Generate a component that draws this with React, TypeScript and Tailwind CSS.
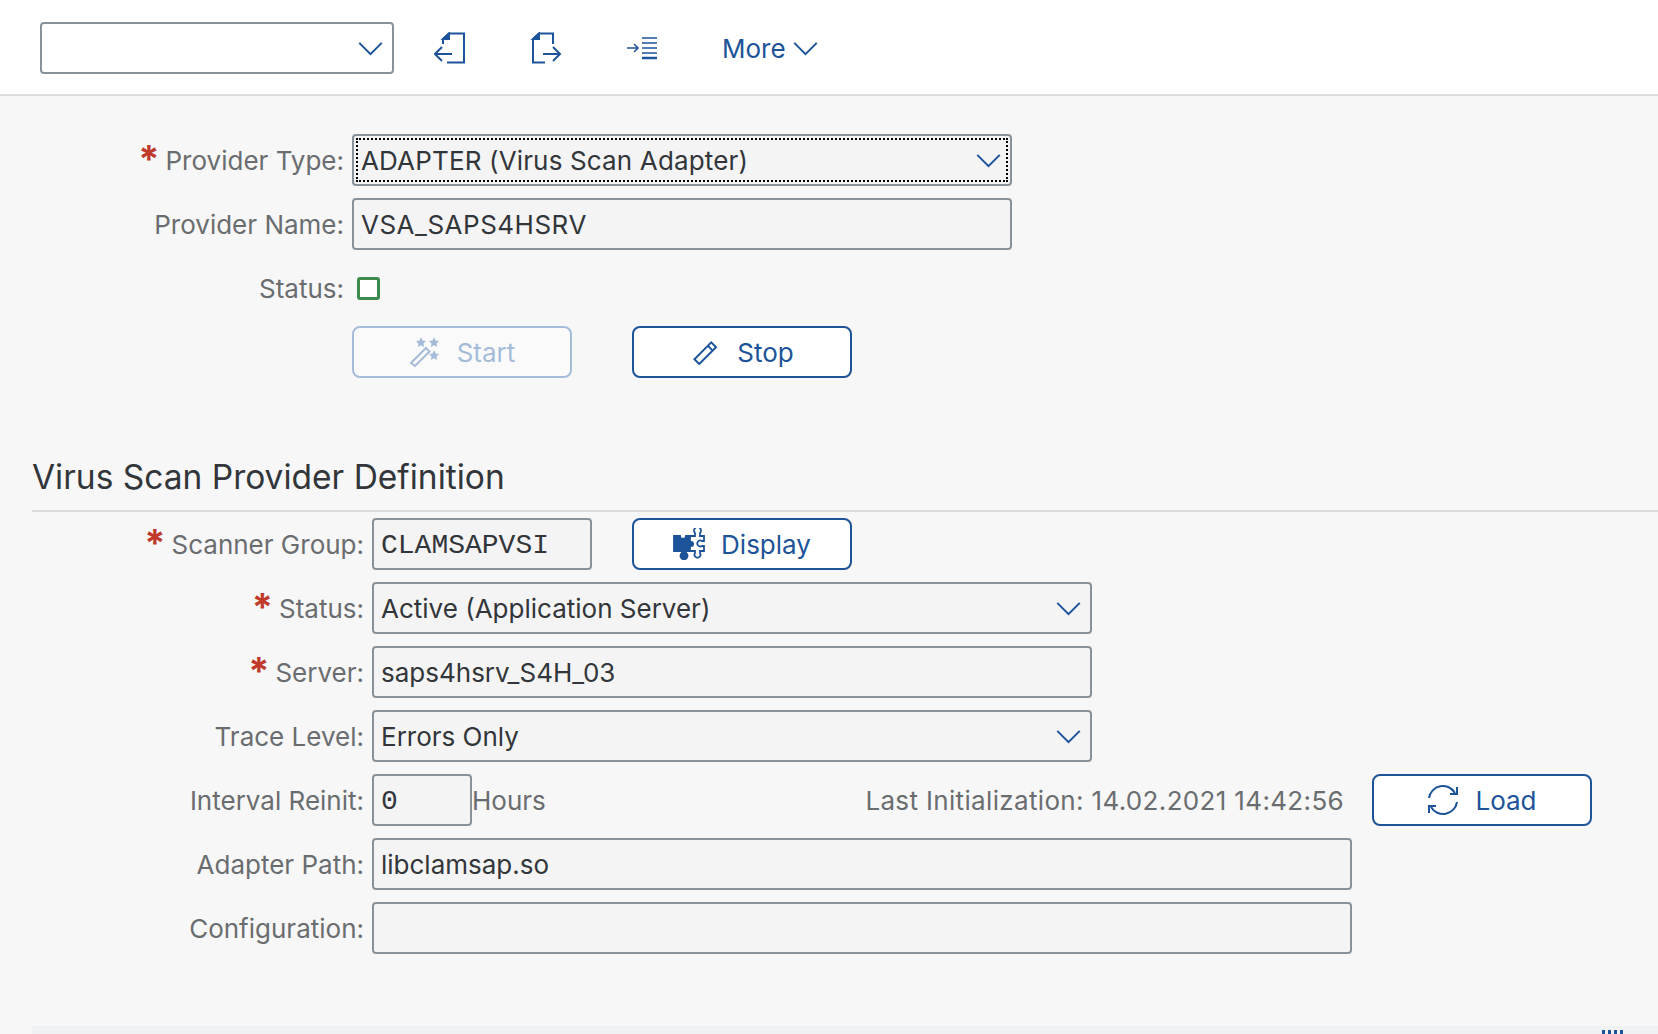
import type { ReactNode } from "react";

const SANS = "font-['Inter','Noto_Sans',sans-serif]";

function Chevron({ className }: { className: string }) {
  return (
    <svg viewBox="0 0 26 16" className={className} fill="none" stroke="#1d5499" strokeWidth="2.2">
      <path d="M1 2 13 14 25 2" />
    </svg>
  );
}

function ImportDoc() {
  return (
    <svg viewBox="0 0 32 32" className="size-8" fill="none" stroke="#1d5499" strokeWidth="2">
      <path d="M9 12V7l6-5.500h15V30.500H13" />
      <path d="M9 7h6V1.500z" fill="#1d5499" />
      <path d="M1 22h17M8 15l-7 7 7 7" />
    </svg>
  );
}

function ExportDoc() {
  return (
    <svg viewBox="0 0 32 32" className="size-8" fill="none" stroke="#1d5499" strokeWidth="2">
      <path d="M3 7l6-5.500h14V12M3 7v23.500h12" />
      <path d="M3 7h6V1.500z" fill="#1d5499" />
      <path d="M13 22h17M23 15l7 7-7 7" />
    </svg>
  );
}

function IndentList() {
  return (
    <svg viewBox="0 0 32 24" className="h-6 w-8" fill="none" stroke="#1d5499" strokeWidth="1.500">
      <path d="M1 12h11M8 8l4 4-4 4" />
      <path d="M16 2h15M16 7h15M16 12h15M16 17h15" strokeWidth="1.500" />
      <path d="M16 22h15" strokeWidth="2.500" />
    </svg>
  );
}

function Wand() {
  return (
    <svg viewBox="0 0 32 32" className="size-8" fill="#a5bcd9" stroke="none">
      <path d="M2 27 17 12l3.500 3.500L6 30z" fill="none" stroke="#a5bcd9" strokeWidth="2" />
      <path d="M12 1l1.500 3.500 3.500.500-2.500 2.500.600 3.500-3.100-1.800-3.100 1.800.600-3.500L7 5l3.500-.500z" />
      <path d="M25 1l1.500 3.500 3.500.500-2.500 2.500.600 3.500-3.100-1.800-3.100 1.800.600-3.500L20 5l3.500-.500z" />
      <path d="M25 14l1.500 3.500 3.500.500-2.500 2.500.600 3.500-3.100-1.800-3.100 1.800.600-3.500L20 18l3.500-.500z" />
    </svg>
  );
}

function Pencil() {
  return (
    <svg viewBox="0 0 26 26" className="mx-[3px] size-[25px]" fill="none" stroke="#1d5499" strokeWidth="2">
      <path d="M1.500 20 19 2.500l5 5L6.500 25z" />
      <path d="M15.500 6l5 5" />
    </svg>
  );
}

function Puzzle() {
  return (
    <svg viewBox="0 0 32 32" className="size-8" fill="none" stroke="#1d5499" strokeWidth="1.800">
      <path d="M1 8h6a3 3 0 1 0 6 0h4v15h-4v2a3.500 3.500 0 1 1-4 0v-2H1z" fill="#1d5499" />
      <path d="M17 8h5V5a3.500 3.500 0 1 1 5 0v3h4v5h-2a3 3 0 1 0 0 5h2v5h-4v2a3 3 0 1 1-5 0v-2h-5" />
      <circle cx="18" cy="16" r="3" fill="#1d5499" stroke="none" />
    </svg>
  );
}

function Refresh() {
  return (
    <svg viewBox="0 0 32 32" className="size-8" fill="none" stroke="#1d5499" strokeWidth="2">
      <path d="M2 14A14 14 0 0 1 28 9" />
      <path d="M30 3v7h-7" />
      <path d="M30 18A14 14 0 0 1 4 23" />
      <path d="M2 29v-7h7" />
    </svg>
  );
}

function Field({ children, mono, className, select, focus }: {
  children?: ReactNode;
  mono?: boolean;
  className: string;
  select?: boolean;
  focus?: boolean;
}) {
  return (
    <div className={`relative flex h-[52px] flex-none items-center rounded-[4px] border-2 border-[#89919a] bg-[#f4f4f4] pl-[7px] text-[#32363a] ${mono ? "pt-[3px] font-['Liberation_Mono',monospace] text-[28px]" : ""} ${className}`}>
      <span className="flex-1 whitespace-nowrap">{children}</span>
      {select && <Chevron className="mr-[8px] h-[15px] w-[27px]" />}
      {focus && <span className="absolute inset-[2px] border-2 border-dotted border-black" />}
    </div>
  );
}

function Label({ children, required, width }: { children: string; required?: boolean; width: string }) {
  return (
    <div className={`flex flex-none items-center justify-end pr-[8px] whitespace-nowrap text-[#6a6d70] ${width}`}>
      {required && <span className="mr-[6px] -mt-[2px] text-[38px] leading-none font-bold text-[#c0392b]">*</span>}
      {children}
    </div>
  );
}

function Action({ icon, text, muted }: { icon: ReactNode; text: string; muted?: boolean }) {
  return (
    <button
      type="button"
      className={`flex h-[52px] w-[220px] flex-none items-center justify-center gap-[16px] rounded-[8px] border-2 ${
        muted ? "border-[#a5bcd9] bg-[#fafafa] text-[#a5bcd9]" : "border-[#1d5499] bg-white text-[#1d5499]"
      }`}
    >
      {icon}
      {text}
    </button>
  );
}

export default function App() {
  const top = "w-[352px]";
  const low = "w-[372px]";

  return (
    <div className={`flex h-[1034px] flex-col bg-[#f7f7f7] text-[26px] ${SANS}`}>
      <div className="flex h-[96px] flex-none items-center border-b-2 border-[#dcdcdc] bg-white pt-[2px] pl-[40px]">
        <div className="flex h-[52px] w-[354px] items-center justify-end rounded-[4px] border-2 border-[#89919a] bg-white pr-[8px]">
          <Chevron className="h-[15px] w-[27px]" />
        </div>
        <div className="ml-[40px] flex items-center gap-[64px]">
          <ImportDoc />
          <ExportDoc />
          <IndentList />
        </div>
        <div className="ml-[64px] flex items-center gap-[6px] text-[#1d5499]">
          More
          <Chevron className="h-[15px] w-[27px]" />
        </div>
      </div>

      <div className="flex flex-col gap-[12px] pt-[38px]">
        <div className="flex">
          <Label required width={top}>Provider Type:</Label>
          <Field select focus className="w-[660px] tracking-[0.15px]">ADAPTER (Virus Scan Adapter)</Field>
        </div>
        <div className="flex">
          <Label width={top}>Provider Name:</Label>
          <Field className="w-[660px] tracking-[0.5px]">VSA_SAPS4HSRV</Field>
        </div>
        <div className="flex h-[52px] items-center">
          <Label width={top}>Status:</Label>
          <span className="ml-[5px] size-[23px] rounded-[3px] border-[3px] border-[#3c8a4c] bg-white" />
        </div>
        <div className="flex">
          <div className={top} />
          <Action muted icon={<Wand />} text="Start" />
          <div className="ml-[60px]">
            <Action icon={<Pencil />} text="Stop" />
          </div>
        </div>
      </div>

      <div className="mt-[71px] ml-[32px] border-b-2 border-[#dcdcdc] pb-[5px] text-[33.5px] leading-[56px] text-[#32363a]">
        Virus Scan Provider Definition
      </div>

      <div className="flex flex-col gap-[12px] pt-[6px]">
        <div className="flex">
          <Label required width={low}>Scanner Group:</Label>
          <Field mono className="w-[220px]">CLAMSAPVSI</Field>
          <div className="ml-[40px]">
            <Action icon={<Puzzle />} text="Display" />
          </div>
        </div>
        <div className="flex">
          <Label required width={low}>Status:</Label>
          <Field select className="w-[720px]">Active (Application Server)</Field>
        </div>
        <div className="flex">
          <Label required width={low}>Server:</Label>
          <Field className="w-[720px]">saps4hsrv_S4H_03</Field>
        </div>
        <div className="flex">
          <Label width={low}>Trace Level:</Label>
          <Field select className="w-[720px]">Errors Only</Field>
        </div>
        <div className="flex items-center">
          <Label width={low}>Interval Reinit:</Label>
          <Field mono className="w-[100px]">0</Field>
          <div className="flex w-[880px] flex-none items-center justify-between pr-[8px] text-[#6a6d70]">
            <span>Hours</span>
            <span className="tracking-[0.34px]">Last Initialization: 14.02.2021 14:42:56</span>
          </div>
          <div className="ml-[20px]">
            <Action icon={<Refresh />} text="Load" />
          </div>
        </div>
        <div className="flex">
          <Label width={low}>Adapter Path:</Label>
          <Field className="w-[980px]">libclamsap.so</Field>
        </div>
        <div className="flex">
          <Label width={low}>Configuration:</Label>
          <Field className="w-[980px]" />
        </div>
      </div>

      <div className="mt-auto ml-[32px] flex h-[8px] justify-end bg-[#eff1f2] pr-[35px]">
        <div className="mt-[4px] flex gap-[3px]">
          <span className="h-[4px] w-[3px] bg-[#1d5499]" />
          <span className="h-[4px] w-[3px] bg-[#1d5499]" />
          <span className="h-[4px] w-[3px] bg-[#1d5499]" />
          <span className="h-[4px] w-[3px] bg-[#1d5499]" />
        </div>
      </div>
    </div>
  );
}
